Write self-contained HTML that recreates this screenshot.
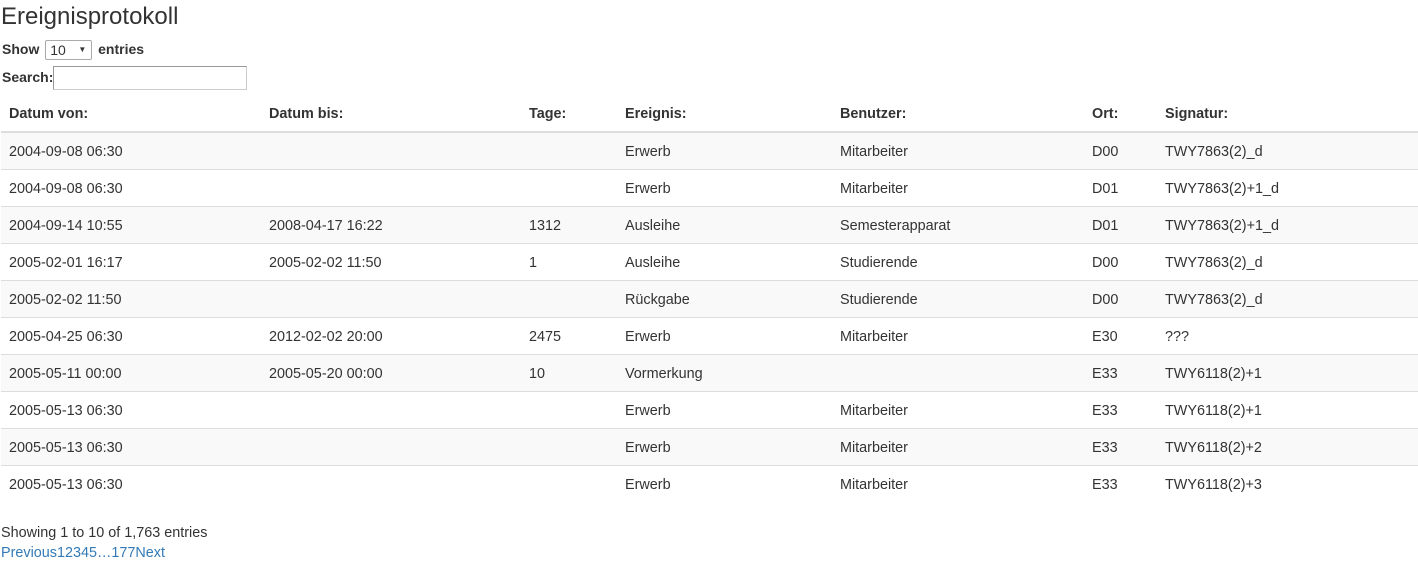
<!DOCTYPE html>
<html><head><meta charset="utf-8"><style>
body{margin:0;font-family:"Liberation Sans",sans-serif;font-size:14px;color:#333;background:#fff}
h1{font-size:24px;font-weight:normal;margin:0;position:absolute;left:1px;top:3px;line-height:28px}
.show{position:absolute;left:2px;top:39px;font-weight:bold;font-size:14px;line-height:20px}
.sel{display:inline-block;vertical-align:middle;border:1px solid #aaa;border-radius:2px;font-weight:normal;font-size:14px;line-height:18px;padding-left:4px;box-sizing:border-box;width:47px;height:20px;position:relative;margin:0 2px}
.sel:after{content:"▼";position:absolute;right:5px;top:0;font-size:8px}
.search{position:absolute;left:2px;top:65px;font-weight:bold;font-size:14px;line-height:24px}
.search span{display:inline-block;vertical-align:middle;width:194px;height:24px;border:1px solid #ccc;border-top-color:#999;border-left-color:#999;box-sizing:border-box}
table{position:absolute;left:1px;top:95px;width:1417px;border-collapse:collapse;font-size:14.4px}
td,th{padding:2px 8px 0;text-align:left;height:34px;border-top:1px solid #ddd;vertical-align:middle}
th{border-top:none;border-bottom:2px solid #ddd;height:34px;font-weight:bold}
tbody tr:nth-child(odd){background:#f9f9f9}
.info{position:absolute;left:1px;top:524px;line-height:18px;font-size:14.4px}
.pg{position:absolute;left:1px;top:544px;line-height:18px;color:#337ab7;font-size:14.4px}
</style></head><body>
<h1>Ereignisprotokoll</h1>
<div class="show">Show <span class="sel">10</span> entries</div>
<div class="search">Search:<span></span></div>
<table>
<colgroup><col style="width:260px"><col style="width:260px"><col style="width:96px"><col style="width:215px"><col style="width:252px"><col style="width:73px"><col></colgroup>
<thead><tr><th>Datum von:</th><th>Datum bis:</th><th>Tage:</th><th>Ereignis:</th><th>Benutzer:</th><th>Ort:</th><th>Signatur:</th></tr></thead>
<tbody>
<tr><td>2004-09-08 06:30</td><td></td><td></td><td>Erwerb</td><td>Mitarbeiter</td><td>D00</td><td>TWY7863(2)_d</td></tr>
<tr><td>2004-09-08 06:30</td><td></td><td></td><td>Erwerb</td><td>Mitarbeiter</td><td>D01</td><td>TWY7863(2)+1_d</td></tr>
<tr><td>2004-09-14 10:55</td><td>2008-04-17 16:22</td><td>1312</td><td>Ausleihe</td><td>Semesterapparat</td><td>D01</td><td>TWY7863(2)+1_d</td></tr>
<tr><td>2005-02-01 16:17</td><td>2005-02-02 11:50</td><td>1</td><td>Ausleihe</td><td>Studierende</td><td>D00</td><td>TWY7863(2)_d</td></tr>
<tr><td>2005-02-02 11:50</td><td></td><td></td><td>Rückgabe</td><td>Studierende</td><td>D00</td><td>TWY7863(2)_d</td></tr>
<tr><td>2005-04-25 06:30</td><td>2012-02-02 20:00</td><td>2475</td><td>Erwerb</td><td>Mitarbeiter</td><td>E30</td><td>???</td></tr>
<tr><td>2005-05-11 00:00</td><td>2005-05-20 00:00</td><td>10</td><td>Vormerkung</td><td></td><td>E33</td><td>TWY6118(2)+1</td></tr>
<tr><td>2005-05-13 06:30</td><td></td><td></td><td>Erwerb</td><td>Mitarbeiter</td><td>E33</td><td>TWY6118(2)+1</td></tr>
<tr><td>2005-05-13 06:30</td><td></td><td></td><td>Erwerb</td><td>Mitarbeiter</td><td>E33</td><td>TWY6118(2)+2</td></tr>
<tr><td>2005-05-13 06:30</td><td></td><td></td><td>Erwerb</td><td>Mitarbeiter</td><td>E33</td><td>TWY6118(2)+3</td></tr>
</tbody></table>
<div class="info">Showing 1 to 10 of 1,763 entries</div>
<div class="pg">Previous12345…177Next</div>
</body></html>
